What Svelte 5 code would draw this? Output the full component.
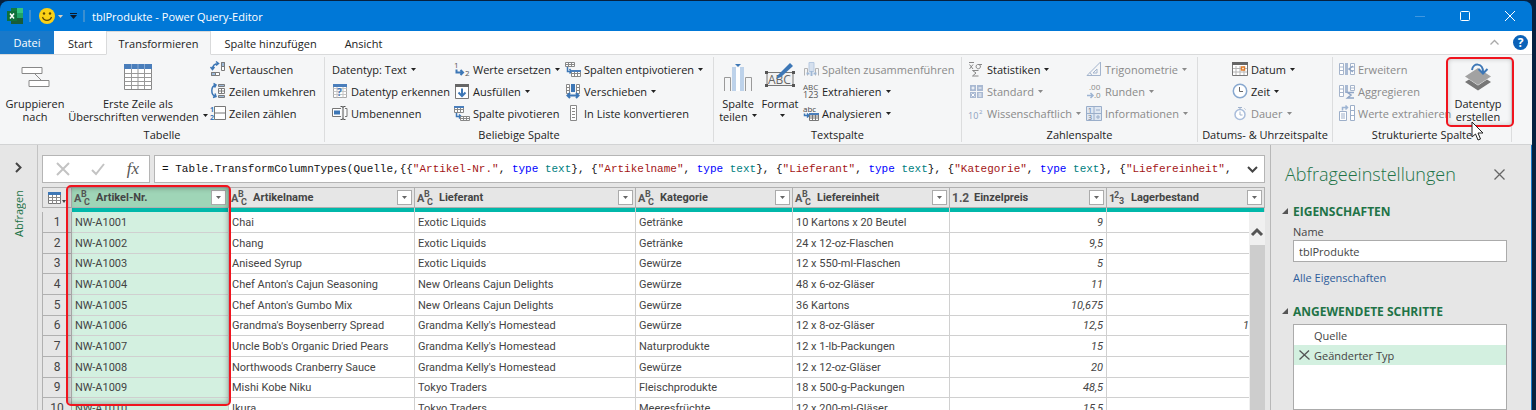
<script lang="ts">
  type Cmd = { text: string; icon?: string; menu?: boolean; off?: boolean };
  type Big = { lines: string[]; icon: string; menu?: boolean };
  type Group = { id: string; title: string; big: Big[]; cmds: Cmd[]; bigLast?: boolean };

  const tabs = ['Start', 'Transformieren', 'Spalte hinzufügen', 'Ansicht'];
  let activeTab = $state('Transformieren');

  const groups: Group[] = [
    {
      id: 'table',
      title: 'Tabelle',
      big: [
        { lines: ['Gruppieren', 'nach'], icon: 'group' },
        { lines: ['Erste Zeile als', 'Überschriften verwenden'], icon: 'firstRow', menu: true },
      ],
      cmds: [
        { text: 'Vertauschen', icon: 'transpose' },
        { text: 'Zeilen umkehren', icon: 'reverse' },
        { text: 'Zeilen zählen', icon: 'count' },
      ],
    },
    {
      id: 'any',
      title: 'Beliebige Spalte',
      big: [],
      cmds: [
        { text: 'Datentyp: Text', menu: true },
        { text: 'Datentyp erkennen', icon: 'detect' },
        { text: 'Umbenennen', icon: 'rename' },
        { text: 'Werte ersetzen', icon: 'replace', menu: true },
        { text: 'Ausfüllen', icon: 'fill', menu: true },
        { text: 'Spalte pivotieren', icon: 'pivot' },
        { text: 'Spalten entpivotieren', icon: 'unpivot', menu: true },
        { text: 'Verschieben', icon: 'move', menu: true },
        { text: 'In Liste konvertieren', icon: 'list' },
      ],
    },
    {
      id: 'text',
      title: 'Textspalte',
      big: [
        { lines: ['Spalte', 'teilen'], icon: 'split', menu: true },
        { lines: ['Format', ''], icon: 'format', menu: true },
      ],
      cmds: [
        { text: 'Spalten zusammenführen', icon: 'merge', off: true },
        { text: 'Extrahieren', icon: 'extract', menu: true },
        { text: 'Analysieren', icon: 'parse', menu: true },
      ],
    },
    {
      id: 'number',
      title: 'Zahlenspalte',
      big: [],
      cmds: [
        { text: 'Statistiken', icon: 'stats', menu: true },
        { text: 'Standard', icon: 'standard', menu: true, off: true },
        { text: 'Wissenschaftlich', icon: 'science', menu: true, off: true },
        { text: 'Trigonometrie', icon: 'trig', menu: true, off: true },
        { text: 'Runden', icon: 'round', menu: true, off: true },
        { text: 'Informationen', icon: 'info', menu: true, off: true },
      ],
    },
    {
      id: 'date',
      title: 'Datums- & Uhrzeitspalte',
      big: [],
      cmds: [
        { text: 'Datum', icon: 'date', menu: true },
        { text: 'Zeit', icon: 'time', menu: true },
        { text: 'Dauer', icon: 'duration', menu: true, off: true },
      ],
    },
    {
      id: 'struct',
      title: 'Strukturierte Spalte',
      bigLast: true,
      big: [{ lines: ['Datentyp', 'erstellen'], icon: 'datatype' }],
      cmds: [
        { text: 'Erweitern', icon: 'expand', off: true },
        { text: 'Aggregieren', icon: 'aggregate', off: true },
        { text: 'Werte extrahieren', icon: 'values', off: true },
      ],
    },
  ];

  // 16x16 drawings
  const small: Record<string, string> = {
    transpose:
      '<path d="M11.5 1.5h3v8h-3zM11.5 5.5h3" fill="#fff" stroke="#7a7a7a"/><path d="M11.5 1.5h3v4h-3z" fill="#9db9d8" stroke="#7a7a7a"/><path d="M1.5 11.5h8v3h-8z" fill="#fff" stroke="#7a7a7a"/><path d="M1.5 11.5h4v3h-4z" fill="#9db9d8" stroke="#7a7a7a"/><path d="M2.5 8.5C2.5 4.500 5 2.500 8.500 2.500M6 .5l2.500 2L6 4.500M.5 6l2 2.500 2-2.500" fill="none" stroke="#3d77b6" stroke-width="1.500"/>',
    reverse:
      '<path d="M8.500 1.500h6v2h-6zM8.500 12.500h6v2h-6z" fill="#9db9d8" stroke="#7a7a7a"/><path d="M8.500 5.500h6v5h-6zM8.500 8h6M11.500 5.500v5" fill="#fff" stroke="#7a7a7a"/><path d="M6 2C.5 3 .5 12 5.500 13.500M3.500 .5L6 2 4.500 4.500M3 14.500l3-1-1-3" fill="none" stroke="#3d77b6" stroke-width="1.500"/>',
    count:
      '<path d="M4.500 1.500h11v13h-11zM4.500 8h11" fill="#fff" stroke="#777"/><text x="0" y="7" font-size="7" font-weight="700" fill="#3d77b6">1</text><text x="0" y="15" font-size="7" font-weight="700" fill="#3d77b6">2</text>',
    detect:
      '<path d="M1.500 1.500h13v13h-13z" fill="#fff" stroke="#a8a8a8"/><path d="M1.500 5.500h13M1.500 8.500h13M1.500 11.500h13M5 4v10.500M11 4v10.500" stroke="#c4c4c4"/><path d="M1 1h14v3H1z" fill="#4a7ebb"/><text x="5" y="13" font-size="10" font-weight="700" fill="#3d77b6">?</text>',
    rename:
      '<path d="M9 3.500H.5v8H9M13 3.500h2v8h-2" fill="#fff" stroke="#777"/><path d="M2 5.500h6v4H2z" fill="#3d77b6"/><path d="M8.500 1.500h2l.5 1 .5-1h2M11 2v12M8.500 14.500h2l.5-1 .5 1h2" fill="none" stroke="#555"/>',
    replace:
      '<text x="0" y="7" font-size="8" fill="#555">1</text><text x="11" y="15" font-size="8" fill="#555">2</text><path d="M2.500 8.500v3h6M6.500 9l2.500 2.500L6.500 14" fill="none" stroke="#3d77b6" stroke-width="2"/>',
    fill:
      '<path d="M1.500 1.500h13v14h-13z" fill="#fff" stroke="#777"/><path d="M1 1h14v3H1z" fill="#666"/><path d="M8 5.500v7M4.500 9.500L8 13l3.500-3.500" fill="none" stroke="#3d77b6" stroke-width="2"/>',
    pivot:
      '<path d="M.5 1.500h9v6h-9zM.5 4.500h9M3.500 2v5M6.500 2v5" fill="#fff" stroke="#888"/><path d="M0 1h10v2H0z" fill="#4a7ebb"/><path d="M2.500 8v3.500h4M5 9.500l2 2-2 2" fill="none" stroke="#3d77b6" stroke-width="1.500"/><path d="M6.500 11.500h9v4h-9zM6.500 13.500h9M9.500 11.500v4M12.500 11.500v4" fill="#fff" stroke="#888"/>',
    unpivot:
      '<path d="M.5 1.500h9v4h-9zM.5 3.500h9M3.500 1.500v4M6.500 1.500v4" fill="#fff" stroke="#888"/><path d="M2.500 6v4.500h4M4.500 8l2 2.500-2 2" fill="none" stroke="#3d77b6" stroke-width="1.500"/><path d="M6.500 9.500h9v6h-9zM6.500 12.500h9M9.500 10v5M12.500 10v5" fill="#fff" stroke="#888"/><path d="M6 9h10v2H6z" fill="#4a7ebb"/>',
    move:
      '<path d="M1.500 1.500h3v9h-3zM11.500 1.500h3v9h-3zM1.500 4.500h3M1.500 7.500h3M11.500 4.500h3M11.500 7.500h3" fill="#fff" stroke="#888"/><path d="M6 1h4v8H6z" fill="#3d77b6"/><path d="M2.500 12.500h11M5 10l-2.500 2.500L5 15M11 10l2.500 2.500L11 15" fill="none" stroke="#3d77b6" stroke-width="2"/>',
    list:
      '<path d="M5.500 .5h6v15h-6z" fill="#fff" stroke="#888"/><path d="M7 3.500h3M7 6.500h3M7 9.500h3M7 12.500h3" stroke="#888"/>',
    merge:
      '<path d="M1.500 14.500v-7h3v7M12.500 14.500v-7h3v7" fill="none" stroke="#b3b3b3"/><path d="M6 1.500h5v9H6z" fill="#d5e0ee" stroke="#b7c9e0"/><path d="M3.500 12.500h3M13.500 12.500h-3M8.500 10v5" stroke="#9fb8d6" stroke-width="2"/>',
    extract:
      '<text x="0" y="7" font-size="8" fill="#555">ABC</text><text x="0" y="15" font-size="9" fill="#555">123</text>',
    parse:
      '<text x="0" y="7" font-size="8" fill="#444">abc</text><path d="M1.500 8.500v2h4M4 8.500l2 2-2 2" fill="none" stroke="#3d77b6" stroke-width="1.500"/><path d="M6.500 8.500h9v7h-9zM6.500 11h9M6.500 13h9M9.500 9v6M12.500 9v6" fill="#fff" stroke="#777"/><path d="M6 8h10v2H6z" fill="#4a7ebb"/>',
    stats:
      '<path d="M1 1.500h5M1.500 3.500L5 8M5 3.500L1.500 8M4.500 9.500h6M4.500 9.500L8 12l-3.500 3h6" fill="none" stroke="#888"/><path d="M14 3.500H9.500a2.200 2.200 0 1 0 1.500 0" fill="none" stroke="#888"/>',
    standard:
      '<path d="M2 2h6v6H2zM9 2h6v6H9zM2 9h6v6H2zM9 9h6v6H9z" fill="#a9b9d2"/><path d="M3.500 5h3M5 3.500v3M10.500 5h3M3.500 10.500l3 3M6.500 10.500l-3 3M10.500 11h3M10.500 13h3" stroke="#fff"/>',
    science:
      '<text x="0" y="14" font-size="9" fill="#8ba0c1">10</text><text x="11" y="9" font-size="6" fill="#8ba0c1">2</text>',
    trig:
      '<path d="M1 14.500L14.500 1v13.500zM7 12l4-4v4z" fill="none" stroke="#a3b4cd"/><path d="M4 11.500l2 3" stroke="#a3b4cd"/>',
    round:
      '<text x="3" y="7" font-size="8" fill="#8a8a8a">.00</text><text x="8" y="15" font-size="8" fill="#8a8a8a">.0</text><path d="M1 12.500h6M4.500 10L7 12.500 4.500 15" fill="none" stroke="#9db4d3" stroke-width="1.500"/>',
    info:
      '<path d="M.5 1.500h15v14H.5z" fill="#dfe7f2" stroke="#9aaeca"/><path d="M8 1.500v14M.5 8.500h15M10 5h4M10 12h4M12 10v4" stroke="#9aaeca"/><text x="2" y="8" font-size="7" fill="#5f7088">1</text><text x="2" y="15" font-size="7" fill="#5f7088">3</text>',
    date:
      '<path d="M.5 1.500h15v13H.5z" fill="#fff" stroke="#777"/><path d="M0 1h16v3H0z" fill="#666"/><path d="M4 5v9M8 5v9M12 5v9M1 7.500h14M1 11h14" stroke="#b5b5b5"/><path d="M9.500 6h3v3h-3z" fill="#fff" stroke="#e07b28" stroke-width="1.500"/>',
    time:
      '<circle cx="8" cy="8" r="6.700" fill="#fff" stroke="#88a8cf" stroke-width="1.500"/><path d="M7.500 4v4.500h3.500" fill="none" stroke="#666"/>',
    duration:
      '<circle cx="8" cy="9.500" r="5" fill="#fff" stroke="#a9bddb" stroke-width="1.500"/><path d="M6 2.500h4M8 3v2M12.500 3.500l1 1M8 6.500v3.500h2.500" fill="none" stroke="#a0b2cc"/>',
    expand:
      '<path d="M.5 2.500h4v11h-4zM.5 6h4M.5 9.500h4" fill="#fff" stroke="#a5b4cb"/><path d="M6 2h3v12H6z" fill="#a9bad3"/><path d="M11.500 2.500h4v11h-4zM11.500 6h4M11.500 9.500h4" fill="#fff" stroke="#a5b4cb"/><path d="M14 5l-4 3 4 3" fill="none" stroke="#8fa5c6" stroke-width="1.500"/>',
    aggregate:
      '<path d="M.5 2.500h4v11h-4zM.5 6h4M.5 9.500h4" fill="#fff" stroke="#a5b4cb"/><path d="M6 2h3v8H6z" fill="#a9bad3"/><path d="M11.500 2.500h4v5h-4zM11.500 5h4" fill="#fff" stroke="#a5b4cb"/><path d="M15 9.500H8.500L12 12l-3.500 3H15" fill="none" stroke="#8fa5c6" stroke-width="1.500"/>',
    values:
      '<path d="M.5 6.500h7v9h-7zM2 9h4M2 11h4M2 13h4" fill="#fff" stroke="#9dafc9"/><path d="M11.500 .5h4v15h-4zM11.500 5.500h4M11.500 10.500h4" fill="#fff" stroke="#9dafc9"/><path d="M3.500 5.500v-3h5M6.500 .5l2 2-2 2" fill="none" stroke="#9db4d3" stroke-width="1.500"/>',
  };

  // 30x28 drawings
  const large: Record<string, string> = {
    group:
      '<path d="M2 4.500h20v6H2zM9 17.500h20v6H9z" fill="#fff" stroke="#888"/><path d="M15 11l6 6" stroke="#888"/>',
    firstRow:
      '<path d="M1.500 1.500h27v25h-27z" fill="#fff" stroke="#888"/><path d="M1.500 10.500h27M1.500 14.500h27M1.500 18.500h27M1.500 22.500h27M8.500 5v21M15 5v21M21.500 5v21" stroke="#999"/><path d="M1 1h28v5H1z" fill="#4a7ebb"/><path d="M8.500 1v5M15 1v5M21.500 1v5" stroke="#86a9d3"/>',
    split:
      '<path d="M1.500 28V14.500h6V28M28.500 28V14.500h-6V28" fill="none" stroke="#9a9a9a"/><path d="M9 4h4v24H9zM17 4h4v24h-4z" fill="#bdd2ea"/><path d="M13 4.500h4V28h-4z" fill="#fff"/><path d="M12 1h6l-3 3z" fill="#3d77b6"/>',
    format:
      '<path d="M2 9.500h26v13H2z" fill="#f2f2f2" stroke="#777"/><path d="M0 8h3v3H0zM27 8h3v3h-3zM0 21h3v3H0zM27 21h3v3h-3z" fill="#555"/><text x="3" y="21" font-size="12" fill="#666">ABC</text><path d="M11 16l2-4L25 0l3 3-12 11z" fill="#3d77b6"/>',
    datatype:
      '<path d="M2 19l4-2.500 9 6 9-6 4 2.500-13 8.500z" fill="#777"/><path d="M15 5l13 8.500L15 22 2 13.500z" fill="#a2a2a2"/><path d="M9 7C10-.5 20-.5 20 9" fill="none" stroke="#f5f6f7" stroke-width="4"/><path d="M9 7C10-.5 20-.5 20 9M15.500 6l4.500 4.500L24.500 6" fill="none" stroke="#3d77b6" stroke-width="2"/>',
  };

  const formula: [string, string][] = [
    ['', '= Table.TransformColumnTypes(Quelle,{{'],
    ['str', '"Artikel-Nr."'],
    ['', ', '],
    ['kw', 'type'],
    ['ty', ' text'],
    ['', '}, {'],
    ['str', '"Artikelname"'],
    ['', ', '],
    ['kw', 'type'],
    ['ty', ' text'],
    ['', '}, {'],
    ['str', '"Lieferant"'],
    ['', ', '],
    ['kw', 'type'],
    ['ty', ' text'],
    ['', '}, {'],
    ['str', '"Kategorie"'],
    ['', ', '],
    ['kw', 'type'],
    ['ty', ' text'],
    ['', '}, {'],
    ['str', '"Liefereinheit"'],
    ['', ','],
  ];

  const columns = [
    { name: 'Artikel-Nr.', type: 'text' },
    { name: 'Artikelname', type: 'text' },
    { name: 'Lieferant', type: 'text' },
    { name: 'Kategorie', type: 'text' },
    { name: 'Liefereinheit', type: 'text' },
    { name: 'Einzelpreis', type: 'decimal' },
    { name: 'Lagerbestand', type: 'int' },
  ];

  const rows = [
    ['NW-A1001', 'Chai', 'Exotic Liquids', 'Getränke', '10 Kartons x 20 Beutel', '9', ''],
    ['NW-A1002', 'Chang', 'Exotic Liquids', 'Getränke', '24 x 12-oz-Flaschen', '9,5', ''],
    ['NW-A1003', 'Aniseed Syrup', 'Exotic Liquids', 'Gewürze', '12 x 550-ml-Flaschen', '5', ''],
    ['NW-A1004', "Chef Anton's Cajun Seasoning", 'New Orleans Cajun Delights', 'Gewürze', '48 x 6-oz-Gläser', '11', ''],
    ['NW-A1005', "Chef Anton's Gumbo Mix", 'New Orleans Cajun Delights', 'Gewürze', '36 Kartons', '10,675', ''],
    ['NW-A1006', "Grandma's Boysenberry Spread", "Grandma Kelly's Homestead", 'Gewürze', '12 x 8-oz-Gläser', '12,5', '1'],
    ['NW-A1007', "Uncle Bob's Organic Dried Pears", "Grandma Kelly's Homestead", 'Naturprodukte', '12 x 1-lb-Packungen', '15', ''],
    ['NW-A1008', 'Northwoods Cranberry Sauce', "Grandma Kelly's Homestead", 'Gewürze', '12 x 12-oz-Gläser', '20', ''],
    ['NW-A1009', 'Mishi Kobe Niku', 'Tokyo Traders', 'Fleischprodukte', '18 x 500-g-Packungen', '48,5', ''],
    ['NW-A1010', 'Ikura', 'Tokyo Traders', 'Meeresfrüchte', '12 x 200-ml-Gläser', '15,5', ''],
  ];

  const steps = ['Quelle', 'Geänderter Typ'];
  let activeStep = $state('Geänderter Typ');
  let queryName = $state('tblProdukte');
</script>

{#snippet caret()}
  <svg class="caret" width="5" height="3" viewBox="0 0 5 3" aria-hidden="true"><path d="M0 0h5L2.500 3z" fill="currentColor" /></svg>
{/snippet}

{#snippet bigButtons(items: Big[])}
  {#each items as b}
    <button class="big">
      <svg width="30" height="28" viewBox="0 0 30 28" aria-hidden="true">{@html large[b.icon]}</svg>
      <span>{b.lines[0]}</span>
      <span>{b.lines[1]}{#if b.menu}{@render caret()}{/if}</span>
    </button>
  {/each}
{/snippet}

<div class="window">
  <header class="titlebar">
    <svg width="16" height="16" viewBox="0 0 16 16" aria-hidden="true">
      <path d="M4 0h12v16H4z" fill="#21a366" />
      <path d="M4 0h6v5H4z" fill="#107c41" />
      <path d="M10 0h6v5h-6z" fill="#33c481" />
      <path d="M4 10h12v6H4z" fill="#185c37" />
      <path d="M0 3h10v10H0z" fill="#0f703b" />
      <path d="M3 5.500l4 5M7 5.500l-4 5" stroke="#fff" stroke-width="1.500" />
    </svg>
    <i class="bar"></i>
    <svg class="smiley" width="16" height="16" viewBox="0 0 16 16" aria-hidden="true">
      <circle cx="8" cy="8" r="8" fill="#fcd116" />
      <circle cx="5" cy="5.500" r="1.200" fill="#5b4300" />
      <circle cx="11" cy="5.500" r="1.200" fill="#5b4300" />
      <path d="M3.500 9c1.500 4.500 7.500 4.500 9 0" fill="none" stroke="#5b4300" stroke-width="1.200" />
    </svg>
    {@render caret()}
    <svg width="7" height="6" viewBox="0 0 7 6" aria-hidden="true"><path d="M0 0h7v1H0zM0 2h7L3.500 6z" fill="#0b1a2a" /></svg>
    <i class="bar"></i>
    <span class="title">tblProdukte - Power Query-Editor</span>
    <div class="winbtns">
      <button aria-label="Minimieren"><svg width="10" height="10" viewBox="0 0 10 10"><path d="M0 5.500h10" stroke="#3f97e0" /></svg></button>
      <button aria-label="Maximieren"><svg width="10" height="10" viewBox="0 0 10 10"><rect x=".5" y=".5" width="9" height="9" rx="1" fill="none" stroke="#fff" /></svg></button>
      <button aria-label="Schließen"><svg width="10" height="10" viewBox="0 0 10 10"><path d="M0 0l10 10M10 0L0 10" stroke="#fff" /></svg></button>
    </div>
  </header>

  <nav class="tabs">
    <button class="tab file">Datei</button>
    {#each tabs as t}
      <button class="tab" class:active={t === activeTab} onclick={() => (activeTab = t)}>{t}</button>
    {/each}
    <div class="tabtools">
      <button aria-label="Menüband reduzieren"><svg width="9" height="5" viewBox="0 0 9 5"><path d="M.5 4.500l4-4 4 4" fill="none" stroke="#aaa" stroke-width="1.300" /></svg></button>
      <button class="help" aria-label="Hilfe">?</button>
    </div>
  </nav>

  <div class="ribbon">
    {#each groups as g}
      <section class="group {g.id}">
        <div class="items">
          {#if !g.bigLast}{@render bigButtons(g.big)}{/if}
          <div class="cmds">
            {#each g.cmds as c}
              <button class="cmd" disabled={c.off}>
                {#if c.icon}<svg width="16" height="16" viewBox="0 0 16 16" aria-hidden="true">{@html small[c.icon]}</svg>{/if}
                <span>{c.text}</span>
                {#if c.menu}{@render caret()}{/if}
              </button>
            {/each}
          </div>
          {#if g.bigLast}
            <div class="marked">
              {@render bigButtons(g.big)}
              <svg class="cursor" width="13" height="20" viewBox="0 0 13 20" aria-hidden="true"><path d="M1 1v15l3.500-3 2.500 6 2.500-1-2.500-6H12z" fill="#fff" stroke="#222" /></svg>
            </div>
          {/if}
        </div>
        <div class="caption">{g.title}</div>
      </section>
    {/each}
  </div>

  <div class="body">
    <aside class="queries">
      <button aria-label="Abfragen einblenden"><svg width="7" height="11" viewBox="0 0 7 11"><path d="M1 1l4.500 4.500L1 10" fill="none" stroke="#444" stroke-width="2" /></svg></button>
      <span>Abfragen</span>
    </aside>

    <main>
      <div class="formulabar">
        <div class="fbtns">
          <button aria-label="Abbrechen"><svg width="14" height="14" viewBox="0 0 14 14"><path d="M1 1l12 12M13 1L1 13" stroke="#c3c3c3" stroke-width="2" /></svg></button>
          <button aria-label="Übernehmen"><svg width="14" height="14" viewBox="0 0 14 14"><path d="M1 8l4 4 8-10" fill="none" stroke="#c3c3c3" stroke-width="2" /></svg></button>
          <button class="fx" aria-label="Schritt hinzufügen">fx</button>
        </div>
        <div class="fbox">
          <div class="code" role="textbox" tabindex="0" contenteditable="true" aria-label="Formel" spellcheck="false">{#each formula as [cls, t]}<span class={cls}>{t}</span>{/each}</div>
          <button aria-label="Erweitern"><svg width="11" height="7" viewBox="0 0 11 7"><path d="M1 1l4.500 4.500L10 1" fill="none" stroke="#444" stroke-width="2" /></svg></button>
        </div>
      </div>

      <div class="gridwrap">
        <table>
          <colgroup>
            <col class="c-num" /><col class="c-s" /><col class="c-m" /><col class="c-l" /><col class="c-s" /><col class="c-s" /><col class="c-s" /><col />
          </colgroup>
          <thead>
            <tr>
              <th class="corner">
                <svg width="18" height="12" viewBox="0 0 18 12" aria-hidden="true">
                  <path d="M.5 .5h12v11H.5z" fill="#fff" stroke="#777" />
                  <path d="M.5 5.500h12M.5 8.500h12M4.500 3v9M8.500 3v9" stroke="#888" />
                  <path d="M0 0h13v3H0z" fill="#3d77b6" />
                  <path d="M14 8h4l-2 3z" fill="#444" />
                </svg>
              </th>
              {#each columns as col, i}
                <th class:sel={i === 0}>
                  <div class="head">
                    <svg width="17" height="16" viewBox="0 0 17 16" aria-hidden="true">
                      {#if col.type === 'text'}
                        <text x="0" y="12" font-size="11">A</text><text x="7" y="7" font-size="9">B</text><text x="10" y="15" font-size="9">C</text>
                      {:else if col.type === 'decimal'}
                        <text x="0" y="12" font-size="12">1.2</text>
                      {:else}
                        <text x="0" y="12" font-size="11">1</text><text x="5" y="8" font-size="9">2</text><text x="10" y="14" font-size="9">3</text>
                      {/if}
                    </svg>
                    <span>{col.name}</span>
                    <button aria-label="Filter {col.name}">{@render caret()}</button>
                  </div>
                </th>
              {/each}
            </tr>
            <tr class="quality"><td></td>{#each columns as _}<td></td>{/each}</tr>
          </thead>
          <tbody>
            {#each rows as row, r}
              <tr>
                <th scope="row">{r + 1}</th>
                {#each row as cell, i}
                  <td class:sel={i === 0} class:num={i > 4}>{cell}</td>
                {/each}
              </tr>
            {/each}
          </tbody>
        </table>
        <div class="vscroll">
          <svg width="12" height="8" viewBox="0 0 12 8" aria-hidden="true"><path d="M1 7l5-5 5 5" fill="none" stroke="#555" stroke-width="3" /></svg>
          <div class="thumb"></div>
        </div>
        <div class="mark"></div>
      </div>
    </main>

    <aside class="settings">
      <div class="settings-head">
        <h2>Abfrageeinstellungen</h2>
        <button aria-label="Bereich schließen"><svg width="11" height="11" viewBox="0 0 11 11"><path d="M.5 .5l10 10M10.500 .5l-10 10" stroke="#666" stroke-width="1.300" /></svg></button>
      </div>
      <h3>EIGENSCHAFTEN</h3>
      <label for="qname">Name</label>
      <input id="qname" type="text" bind:value={queryName} />
      <a href="#eigenschaften">Alle Eigenschaften</a>
      <h3>ANGEWENDETE SCHRITTE</h3>
      <ul>
        {#each steps as s}
          <li class:active={s === activeStep}>
            <button onclick={() => (activeStep = s)}>
              <svg width="11" height="10" viewBox="0 0 11 10" aria-hidden="true">
                {#if s === activeStep}<path d="M.5 .5l10 9M10 .5L.5 9.500" stroke="#555" stroke-width="1.300" />{/if}
              </svg>
              {s}
            </button>
          </li>
        {/each}
      </ul>
    </aside>
  </div>
</div>

<style>
  :global(body) {
    background: #06213f;
    overflow: hidden;
  }
  .window {
    box-sizing: border-box;
    height: 100vh;
    margin-right: 4px;
    padding-top: 1px;
    display: flex;
    flex-direction: column;
    overflow: hidden;
    font-family: 'Open Sans', 'Segoe UI', sans-serif;
    font-size: 11px;
    line-height: 13px;
    color: #222;
  }
  button {
    font: inherit;
    color: inherit;
    background: none;
    border: 0;
    padding: 0;
    margin: 0;
    white-space: nowrap;
  }
  svg {
    flex: none;
    display: block;
    overflow: visible;
  }
  .caret {
    display: inline-block;
    vertical-align: middle;
    margin-left: 4px;
  }

  .titlebar {
    flex: none;
    height: 30px;
    display: flex;
    align-items: center;
    padding-left: 7px;
    border-radius: 8px 8px 0 0;
    background: #0078d7;
    color: #fff;
  }
  .bar {
    width: 2px;
    height: 12px;
    margin: 0 8px 0 6px;
    background: #3b8fd0;
  }
  .titlebar .caret {
    margin: 0 7px 0 3px;
    color: #d9d0c0;
  }
  .title {
    margin-left: -1px;
  }
  .winbtns {
    display: flex;
    margin-left: auto;
  }
  .winbtns button {
    width: 45px;
    height: 30px;
    display: grid;
    place-items: center;
  }

  .tabs {
    flex: none;
    display: flex;
    height: 23px;
    background: #fff;
    border-bottom: 1px solid #d9dadb;
  }
  .tab {
    padding: 0 13px;
    height: 24px;
    border: 1px solid transparent;
  }
  .tab.file {
    width: 54px;
    padding: 0;
    background: #1979ca;
    color: #fff;
    height: 23px;
  }
  .tab.active {
    background: #f5f6f7;
    border-color: #d9dadb;
    border-bottom-color: #f5f6f7;
    padding: 0 11px;
  }
  .tabtools {
    margin-left: auto;
    display: flex;
    align-items: center;
    gap: 14px;
    padding-right: 4px;
  }
  .help {
    width: 15px;
    height: 15px;
    border-radius: 50%;
    background: #0b62b8;
    color: #fff;
    font-weight: 700;
    font-size: 12px;
  }

  .ribbon {
    flex: none;
    display: flex;
    padding: 2px 0;
    height: 85px;
    background: #f5f6f7;
    border-bottom: 1px solid #d2d3d4;
  }
  .group {
    box-sizing: border-box;
    display: flex;
    flex-direction: column;
    border-right: 1px solid #dcddde;
  }
  .items {
    display: flex;
    height: 66px;
    padding-top: 2px;
  }
  .caption {
    margin-top: 3px;
    text-align: center;
    white-space: nowrap;
  }
  .cmds {
    display: grid;
    grid-auto-flow: column;
    grid-template-rows: repeat(3, 22px);
    justify-items: start;
    margin-top: -1px;
  }
  .cmd {
    display: flex;
    align-items: center;
    gap: 3px;
  }
  .cmd .caret {
    margin-left: 1px;
  }
  .cmd:disabled {
    color: #8a8a8a;
  }
  .big {
    display: flex;
    flex-direction: column;
    align-items: center;
    padding-top: 4px;
  }
  .big svg:first-child {
    margin-bottom: 6px;
  }
  .big span {
    height: 13px;
  }
  .table { width: 325px; }
  .table .big:first-child { width: 70px; }
  .table .big:nth-child(2) { width: 136px; }
  .table .cmds { padding-left: 4px; }
  .any { width: 389px; }
  .any .cmds { grid-template-columns: 122px 111px auto; padding-left: 7px; }
  .text { width: 248px; }
  .text .items { padding-left: 3px; }
  .text .big { width: 42px; }
  .text .cmds { padding-left: 2px; }
  .number { width: 236px; }
  .number .cmds { grid-template-columns: 118px auto; padding-left: 6px; }
  .date { width: 135px; }
  .date .cmds { padding-left: 34px; }
  .struct { width: 179px; }
  .struct .cmds { width: 107px; padding-left: 6px; }

  .marked {
    position: relative;
    display: flex;
  }
  .marked .big {
    width: 64px;
  }
  .marked::after {
    content: '';
    position: absolute;
    inset: -2px -4px -2px 0;
    border: 2px solid #f0141e;
    border-radius: 5px;
    box-shadow: inset 0 0 5px rgba(0, 0, 0, 0.2);
  }
  .cursor {
    position: absolute;
    left: 25px;
    top: 62px;
    z-index: 1;
  }

  .body {
    flex: 1;
    min-height: 0;
    display: flex;
    background: #e6e6e6;
    border-right: 1px solid #1979ca;
  }
  .queries {
    flex: none;
    width: 37px;
    display: flex;
    flex-direction: column;
    align-items: center;
    padding-top: 17px;
    gap: 17px;
    border-right: 1px solid #c3c3c3;
    color: #217346;
  }
  .queries span {
    writing-mode: vertical-rl;
    transform: rotate(180deg);
  }

  main {
    flex: 1;
    min-width: 0;
    padding: 10px 5px 0 4px;
    border-right: 1px solid #b8b8b8;
  }
  .formulabar {
    display: flex;
    gap: 4px;
    height: 28px;
    margin-bottom: 4px;
  }
  .fbtns,
  .fbox {
    box-sizing: border-box;
    display: flex;
    align-items: center;
    background: #fff;
    border: 1px solid #b5b5b5;
  }
  .fbtns {
    width: 108px;
    justify-content: space-between;
    padding: 0 10px 0 13px;
  }
  .fx {
    font: italic 17px/20px 'Liberation Serif', serif;
    color: #555;
  }
  .fbox {
    flex: 1;
    min-width: 0;
    justify-content: space-between;
    padding: 0 6px 0 7px;
  }
  .code {
    font-family: 'Liberation Mono', Consolas, monospace;
    font-size: 11px;
    white-space: pre;
    overflow: hidden;
    color: #111;
  }
  .str { color: #a31515; }
  .kw { color: #0000ff; }
  .ty { color: #008080; }

  .gridwrap {
    position: relative;
  }
  table {
    width: 100%;
    table-layout: fixed;
    border-collapse: separate;
    border-spacing: 0;
    background: #fff;
    font-family: Roboto, 'Segoe UI', sans-serif;
    color: #444;
  }
  .c-num { width: 30px; }
  .c-s { width: 157px; }
  .c-m { width: 186px; }
  .c-l { width: 221px; }
  th,
  td {
    box-sizing: border-box;
    padding: 0 3px;
    height: 21px;
    text-align: left;
    white-space: nowrap;
    border-right: 1px solid #d0d0d0;
    border-bottom: 1px solid #d0d0d0;
  }
  tbody tr:nth-child(3n) > * {
    height: 20px;
  }
  thead th {
    height: 20px;
    padding: 0 2px;
    background: #e6e6e6;
    border-top: 1px solid #b0b0b0;
    border-right-color: #b0b0b0;
    border-bottom-color: #b0b0b0;
  }
  thead th.sel {
    background: #9fd5b7;
  }
  .corner {
    padding: 0 0 0 5px;
  }
  .corner,
  tbody th {
    border-left: 1px solid #b0b0b0;
  }
  .head {
    display: flex;
    align-items: center;
    height: 19px;
  }
  .head text {
    fill: #555;
  }
  .head span {
    flex: 1;
    margin-left: 5px;
  }
  .head button {
    box-sizing: border-box;
    width: 15px;
    height: 15px;
    display: grid;
    place-items: center;
    background: #fff;
    border: 1px solid #ababab;
    color: #666;
  }
  .head .caret {
    margin: 0;
  }
  .quality td {
    height: 4px;
    background: #01b8aa;
    border-bottom: 0;
  }
  .quality td:first-child {
    background: #e6e6e6;
  }
  tbody th {
    padding: 0;
    background: #e6e6e6;
    border-color: #b0b0b0;
    font-size: 12px;
    font-weight: 400;
    text-align: center;
  }
  td.sel {
    background: #d3f0e0;
  }
  td.num {
    font-style: italic;
    text-align: right;
  }
  td.num:last-child {
    padding-right: 15px;
  }
  .vscroll {
    position: absolute;
    top: 25px;
    right: 0;
    bottom: 0;
    width: 16px;
    display: flex;
    flex-direction: column;
    align-items: center;
    padding-top: 16px;
    box-sizing: border-box;
    background: #f0f0f0;
  }
  .thumb {
    flex: 1;
    width: 15px;
    margin-top: 9px;
    background: #cdcdcd;
  }
  .mark {
    position: absolute;
    left: 24px;
    top: -2px;
    width: 161px;
    height: 217px;
    border: 2px solid #f0141e;
    border-radius: 5px;
    box-shadow: inset 0 0 6px rgba(0, 0, 0, 0.4);
  }

  .settings {
    box-sizing: border-box;
    flex: none;
    width: 260px;
    display: flex;
    flex-direction: column;
    padding: 15px 24px 0 22px;
    color: #444;
  }
  .settings-head {
    display: flex;
    align-items: center;
    justify-content: space-between;
    margin-left: -8px;
    height: 28px;
  }
  .settings-head button {
    padding-right: 2px;
  }
  h2 {
    margin: 0;
    font-size: 18px;
    font-weight: 300;
    color: #217346;
  }
  h3 {
    display: flex;
    align-items: center;
    margin: 0 0 0 -11px;
    height: 14px;
    font-size: 12px;
    color: #217346;
  }
  h3::before {
    content: '';
    width: 0;
    margin-right: 5px;
    border-left: 6px solid transparent;
    border-bottom: 6px solid #555;
  }
  .settings-head + h3 {
    margin-top: 16px;
  }
  label {
    margin-top: 7px;
  }
  .settings input {
    box-sizing: border-box;
    height: 22px;
    margin: 2px 0 9px;
    padding: 0 5px;
    border: 1px solid #ababab;
    background: #fff;
    font: inherit;
    color: #444;
  }
  .settings a {
    margin-bottom: 20px;
    color: #2f5d9b;
    text-decoration: none;
  }
  ul {
    flex: 1;
    margin: 6px 0 0;
    padding: 0;
    list-style: none;
    background: #fff;
    border: 1px solid #ababab;
  }
  li button {
    display: flex;
    align-items: center;
    gap: 4px;
    width: 100%;
    height: 20px;
    padding-left: 5px;
  }
  li.active {
    background: #d3f0e0;
  }
</style>
